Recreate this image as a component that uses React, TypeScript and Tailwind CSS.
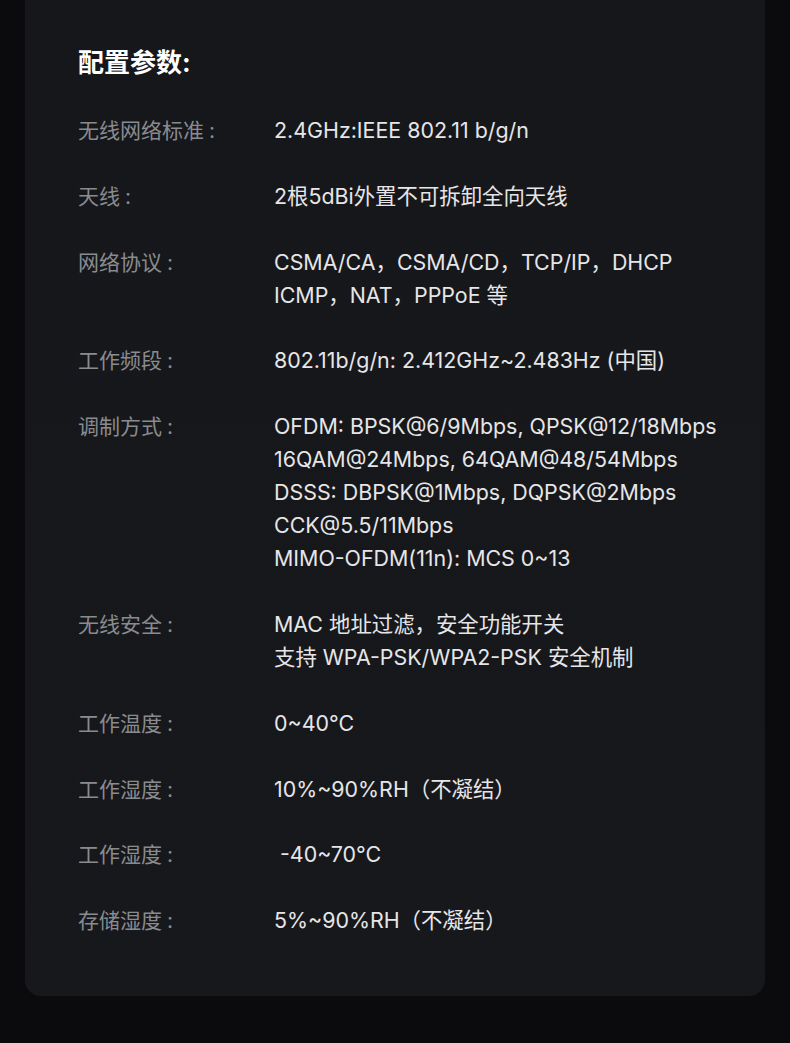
import React from "react";

const rows: { label: string; value: string[] }[] = [
  { label: "无线网络标准", value: ["2.4GHz:IEEE 802.11 b/g/n"] },
  { label: "天线", value: ["2根5dBi外置不可拆卸全向天线"] },
  { label: "网络协议", value: ["CSMA/CA，CSMA/CD，TCP/IP，DHCP", "ICMP，NAT，PPPoE 等"] },
  { label: "工作频段", value: ["802.11b/g/n: 2.412GHz~2.483Hz (中国)"] },
  {
    label: "调制方式",
    value: [
      "OFDM: BPSK@6/9Mbps, QPSK@12/18Mbps",
      "16QAM@24Mbps, 64QAM@48/54Mbps",
      "DSSS: DBPSK@1Mbps, DQPSK@2Mbps",
      "CCK@5.5/11Mbps",
      "MIMO-OFDM(11n): MCS 0~13",
    ],
  },
  { label: "无线安全", value: ["MAC 地址过滤，安全功能开关", "支持 WPA-PSK/WPA2-PSK 安全机制"] },
  { label: "工作温度", value: ["0~40℃"] },
  { label: "工作湿度", value: ["10%~90%RH（不凝结）"] },
  { label: "工作湿度", value: ["\u00a0-40~70℃"] },
  { label: "存储湿度", value: ["5%~90%RH（不凝结）"] },
];

export default function App() {
  return (
    <div
      className="min-h-[1043px] w-[790px] bg-[#0b0b0d] px-[25px] pb-[46px]"
      style={{ fontFamily: 'Inter, "Noto Sans CJK SC", sans-serif' }}
    >
      <div className="rounded-b-[16px] bg-gradient-to-b from-[#16171b] to-[#17181c] pl-[53px] pr-[20px] pt-[45px] pb-[59px]">
        <h2 className="text-[26px] font-bold leading-[36px] text-white">配置参数:</h2>
        <div className="mt-[33px] flex flex-col gap-[32.8px]">
          {rows.map((r, i) => (
            <div key={i} className="grid grid-cols-[196px_1fr]">
              <div className="text-[21px] leading-[33px] text-[#8a8b8f]">
                {r.label}
                <span className="ml-[5px]">:</span>
              </div>
              <div className="text-[21.4px] leading-[33px] text-[#e6e6e8]">
                {r.value.map((v, j) => (
                  <div key={j} className="whitespace-pre">{v}</div>
                ))}
              </div>
            </div>
          ))}
        </div>
      </div>
    </div>
  );
}
